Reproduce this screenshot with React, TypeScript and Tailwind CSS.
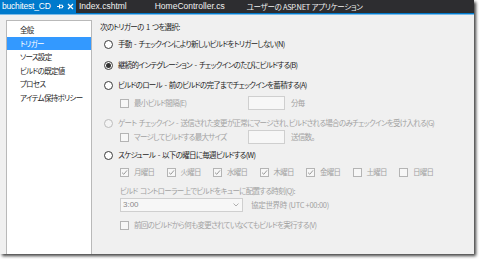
import React from "react";

const JP = "font-['Noto_Sans_CJK_JP','Noto_Sans',sans-serif] [font-feature-settings:'palt']";

function Radio({ checked = false, disabled = false }: { checked?: boolean; disabled?: boolean }) {
  return (
    <span
      className={`flex h-[9px] w-[9px] shrink-0 items-center justify-center rounded-full border ${
        disabled ? "border-[#bcbcbc] bg-[#f4f4f4]" : "border-[#3c3c3c] bg-white"
      }`}
    >
      {checked && <span className="h-[5px] w-[5px] rounded-full bg-[#333333]" />}
    </span>
  );
}

function Check({ checked = false }: { checked?: boolean }) {
  return (
    <span className="flex h-[9px] w-[9px] shrink-0 items-center justify-center border border-[#b4b4b4] bg-[#f7f7f7]">
      {checked && (
        <svg width="7" height="7" viewBox="0 0 7 7">
          <path d="M1 3.6 L2.8 5.3 L6 1.4" fill="none" stroke="#9a9a9a" strokeWidth="1" />
        </svg>
      )}
    </span>
  );
}

const days: { d: string; c: boolean }[] = [
  { d: "月曜日", c: true },
  { d: "火曜日", c: true },
  { d: "水曜日", c: true },
  { d: "木曜日", c: true },
  { d: "金曜日", c: true },
  { d: "土曜日", c: false },
  { d: "日曜日", c: false },
];

const S = () => <span className="inline-block w-[2.5px]" />;

export default function App() {
  return (
    <div className="h-[259px] w-[479px] overflow-hidden bg-white">
      <div className="flex h-[254px] w-[474px] flex-col bg-[#f0f0f0] shadow-[2px_2px_3px_rgba(0,0,0,0.75)]">
        {/* tab bar */}
        <div className="flex h-[13px] shrink-0 items-center whitespace-nowrap bg-[#2d2d30] font-['Liberation_Sans',sans-serif] text-[8.5px] leading-none text-[#f1f1f1]">
          <div className="flex h-full w-[76px] shrink-0 items-center bg-[#007acc] pl-[2px] text-white">
            <span className="tracking-[-0.2px]">buchitest_CD</span>
            <svg className="ml-[6px]" width="7" height="7" viewBox="0 0 7 7">
              <path d="M0 3.5 H2 M2.5 1.5 V5.5 M2.5 2.2 H5.5 V4.8 H2.5 M5.5 3.5 H6.5" fill="none" stroke="#ffffff" strokeWidth="1" />
            </svg>
            <svg className="ml-[3px]" width="7" height="7" viewBox="0 0 7 7">
              <path d="M1 1 L6 6 M6 1 L1 6" stroke="#ffffff" strokeWidth="1.2" />
            </svg>
          </div>
          <span className="ml-[3px]">Index.cshtml</span>
          <span className="ml-[28px]">HomeController.cs</span>
          <span className={`ml-[22px] text-[7.5px] tracking-[-0.3px] ${JP}`}>ユーザーの ASP.NET アプリケーション</span>
        </div>
        <div className="h-[1px] shrink-0 bg-[#007acc]" />
        <div className="h-[1px] shrink-0 bg-[#7cbbe8]" />

        {/* body */}
        <div className={`flex min-h-0 flex-1 whitespace-nowrap text-[7.5px] leading-none tracking-[-0.7px] text-[#1e1e1e] ${JP}`}>
          {/* left list */}
          <div className="ml-[6px] mt-[5px] flex w-[86px] shrink-0 flex-col border-x border-t border-[#b9b9b9] bg-white pt-[2px]">
            {["全般", "トリガー", "ソース設定", "ビルドの既定値", "プロセス", "アイテム保持ポリシー"].map((t) => (
              <div
                key={t}
                className={`flex h-[13.6px] items-center pl-[13px] ${t === "トリガー" ? "bg-[#3399ff] text-white" : ""}`}
              >
                {t}
              </div>
            ))}
          </div>

          {/* right content */}
          <div className="ml-[8px] flex flex-1 flex-col pt-[5px]">
            <div className="flex h-[14px] items-center">次のトリガーの<S />1<S />つを選択:</div>

            <div className="mt-[3px] flex h-[14px] items-center gap-[5px] pl-[4px]">
              <Radio />
              <span>手動<S />-<S />チェックインにより新しいビルドをトリガーしない(N)</span>
            </div>

            <div className="mt-[7px] flex h-[14px] items-center gap-[5px] pl-[4px]">
              <Radio checked />
              <span>継続的インテグレーション<S />-<S />チェックインのたびにビルドする(B)</span>
            </div>

            <div className="mt-[6px] flex h-[14px] items-center gap-[5px] pl-[4px]">
              <Radio />
              <span>ビルドのロール<S />-<S />前のビルドの完了までチェックインを蓄積する(A)</span>
            </div>

            <div className="mt-[4px] flex h-[14px] items-center pl-[20px] text-[#a2a2a2]">
              <div className="flex w-[128px] items-center gap-[5px]">
                <Check />
                <span>最小ビルド間隔(E)</span>
              </div>
              <div className="h-[14px] w-[37px] border border-[#cfcfcf] bg-[#f7f7f7]" />
              <span className="ml-[6px]">分毎</span>
            </div>

            <div className="mt-[6px] flex h-[14px] items-center gap-[5px] pl-[4px] text-[#a2a2a2]">
              <Radio disabled />
              <span>ゲート<S />チェックイン<S />-<S />送信された変更が正常にマージされ、ビルドされる場合のみチェックインを受け入れる(G)</span>
            </div>

            <div className="flex h-[14px] items-center pl-[20px] text-[#a2a2a2]">
              <div className="flex w-[128px] items-center gap-[5px]">
                <Check />
                <span>マージしてビルドする最大サイズ</span>
              </div>
              <div className="h-[14px] w-[37px] border border-[#cfcfcf] bg-[#f7f7f7]" />
              <span className="ml-[6px]">送信数。</span>
            </div>

            <div className="mt-[4px] flex h-[14px] items-center gap-[5px] pl-[4px]">
              <Radio />
              <span>スケジュール<S />-<S />以下の曜日に毎週ビルドする(W)</span>
            </div>

            <div className="mt-[3px] flex h-[14px] items-center pl-[20px] text-[#a2a2a2]">
              {days.map((x) => (
                <div key={x.d} className="flex w-[46.5px] shrink-0 items-center gap-[5px]">
                  <Check checked={x.c} />
                  <span>{x.d}</span>
                </div>
              ))}
            </div>

            <div className="mt-[5px] flex h-[14px] items-center pl-[20px] text-[#a2a2a2]">
              ビルド<S />コントローラー上でビルドをキューに配置する時刻(Q):
            </div>

            <div className="flex h-[14px] items-center pl-[20px] text-[#a2a2a2]">
              <div className="flex h-[14px] w-[123px] items-center justify-between border border-[#cfcfcf] bg-[#f7f7f7] pl-[2px] pr-[3px] font-['Liberation_Sans',sans-serif] text-[8px] tracking-normal">
                <span className="text-[#8a8a8a]">3:00</span>
                <svg width="6" height="4" viewBox="0 0 6 4">
                  <path d="M0.5 0.5 L3 3 L5.5 0.5" fill="none" stroke="#b0b0b0" strokeWidth="1" />
                </svg>
              </div>
              <span className="ml-[8px] tracking-[-0.3px]">協定世界時 (UTC +00:00)</span>
            </div>

            <div className="mt-[6px] flex h-[14px] items-center gap-[5px] pl-[20px] text-[#a2a2a2]">
              <Check />
              <span>前回のビルドから何も変更されていなくてもビルドを実行する(V)</span>
            </div>
          </div>
        </div>
      </div>
    </div>
  );
}
